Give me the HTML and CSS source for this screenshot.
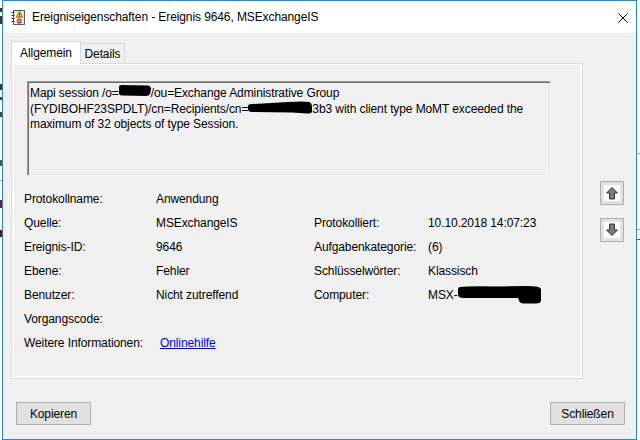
FILE: index.html
```html
<!DOCTYPE html>
<html lang="de">
<head>
<meta charset="utf-8">
<title>Ereigniseigenschaften</title>
<link rel="stylesheet" href="styles.css">
</head>
<body>
<div class="edge edge-left"></div>
<div class="window">
  <div class="titlebar">
    <svg class="app-icon" width="14" height="15" viewBox="0 0 14 15">
      <rect x="2.5" y="0.5" width="11" height="14" fill="#d3dded" stroke="#4d5f7a"/>
      <rect x="3.5" y="1.5" width="9" height="12" fill="#eef3fa"/>
      <g fill="#3a3a3a">
        <rect x="0.5" y="2" width="3" height="1"/>
        <rect x="0.5" y="5" width="3" height="1"/>
        <rect x="0.5" y="8" width="3" height="1"/>
        <rect x="0.5" y="11" width="3" height="1"/>
      </g>
      <path d="M8.5 1.2 L12 7.2 H5 Z" fill="#f2c200" stroke="#8a6a00" stroke-width="0.8" stroke-linejoin="round"/>
      <rect x="8" y="3.3" width="1" height="2" fill="#000"/>
      <rect x="8" y="6" width="1" height="0.8" fill="#000"/>
      <circle cx="8.3" cy="11" r="2.6" fill="#d5262f"/>
      <rect x="6.8" y="10.5" width="3" height="1" fill="#fff"/>
    </svg>
    <span class="title">Ereigniseigenschaften - Ereignis 9646, MSExchangeIS</span>
    <svg class="close" width="10" height="10" viewBox="0 0 10 10">
      <path d="M0.5 0.5 L9.5 9.5 M9.5 0.5 L0.5 9.5" stroke="#000" stroke-width="1" fill="none"/>
    </svg>
  </div>
  <div class="client">
    <div class="main">
      <div class="tabctl">
        <div class="tabs">
          <div class="tab active">Allgemein</div>
          <div class="tab details">Details</div>
        </div>
        <div class="panel">
          <div class="page">
            <div class="msg">Mapi session /o=<svg class="blob" width="32" height="11" viewBox="0 0 32 11"><path d="M0 2 Q0 0 3 0 L29 0.5 Q32 1 32 4 L31 9 Q30 11 27 11 L3 10.5 Q0 10 0 8 Z" fill="#000"/></svg>/ou=Exchange Administrative Group<br>(FYDIBOHF23SPDLT)/cn=Recipients/cn=<svg class="blob blob2" width="64" height="13" viewBox="0 0 64 13"><path d="M0 5 Q0 3 4 3 L40 1 Q56 0 61 1 Q64 2 64 6 L64 11 Q63 13 59 12.5 L44 11.5 L4 11 Q0 11 0 8 Z" fill="#000"/></svg>3b3 with client type MoMT exceeded the<br>maximum of 32 objects of type Session.</div>
            <div class="grid">
              <span>Protokollname:</span><span>Anwendung</span><span></span><span></span>
              <span>Quelle:</span><span>MSExchangeIS</span><span>Protokolliert:</span><span>10.10.2018 14:07:23</span>
              <span>Ereignis-ID:</span><span>9646</span><span>Aufgabenkategorie:</span><span>(6)</span>
              <span>Ebene:</span><span>Fehler</span><span>Schlüsselwörter:</span><span>Klassisch</span>
              <span>Benutzer:</span><span>Nicht zutreffend</span><span>Computer:</span><span>MSX-<svg class="blob blob3" width="84" height="18" viewBox="0 0 84 18"><path d="M2 1 Q10 0 40 0.5 L70 0 Q82 0 83 3 L83 15 Q82 17.5 78 17.5 L65 17.5 Q61 17 61 14 L60 12 L5 12 Q0 12 0 8 L0 4 Q0 1 2 1 Z" fill="#000"/></svg></span>
              <span>Vorgangscode:</span><span></span><span></span><span></span>
              <span>Weitere Informationen:</span><span class="linkcell"><a class="link" href="#">Onlinehilfe</a></span><span></span><span></span>
            </div>
          </div>
        </div>
      </div>
      <div class="nav">
        <button class="navbtn" type="button" aria-label="Vorheriges Ereignis">
          <svg width="16" height="16" viewBox="0 0 16 16"><rect width="16" height="16" fill="#fff"/><path d="M8 2.5 L13.5 8 H10.5 V14 H5.5 V8 H2.5 Z" fill="#7a7a7a" stroke="#333" stroke-width="1" stroke-linejoin="miter"/></svg>
        </button>
        <button class="navbtn" type="button" aria-label="Nächstes Ereignis">
          <svg width="16" height="16" viewBox="0 0 16 16"><rect width="16" height="16" fill="#fff"/><path d="M8 13.5 L13.5 8 H10.5 V2 H5.5 V8 H2.5 Z" fill="#7a7a7a" stroke="#333" stroke-width="1" stroke-linejoin="miter"/></svg>
        </button>
      </div>
    </div>
    <div class="footer">
      <button class="btn" type="button">Kopieren</button>
      <button class="btn" type="button">Schließen</button>
    </div>
  </div>
</div>
<div class="edge edge-right"></div>
</body>
</html>
```

FILE: styles.css
```css
* { box-sizing: border-box; }

html, body {
  margin: 0;
  padding: 0;
}

body {
  width: 640px;
  height: 440px;
  overflow: hidden;
  display: flex;
  background: #fff;
  font-family: "Liberation Sans", Arial, sans-serif;
  font-size: 12px;
  letter-spacing: -0.1px;
  color: #000;
}

.edge { height: 440px; flex: none; }

.edge-left {
  width: 2px;
  background: linear-gradient(#fff 0 8px, #5a2a1a 8px 12px, #fff 12px 16px, #5a2a1a 16px 24px,
    #fff 24px 84px, #333 84px 90px, #fff 90px 97px, #444 97px 100px, #fff 100px 112px,
    #444 112px 117px, #fff 117px 160px, #555 160px 166px, #fff 166px 180px, #999 180px 181px,
    #fff 181px 200px, #6a1a4a 200px 208px, #fff 208px 230px, #5a1020 230px 237px, #fff 237px);
}

.edge-right {
  width: 3px;
  background: linear-gradient(#fff 0 153px, #a0a0a0 153px 154px, #fff 154px 229px,
    #a0a0a0 229px 230px, #fff 230px 239px, #555 239px 240px, #fff 240px);
}

.window {
  width: 635px;
  height: 440px;
  flex: none;
  border: 1px solid #2a86d4;
  display: flex;
  flex-direction: column;
}

.titlebar {
  height: 32px;
  flex: none;
  background: #fff;
  display: flex;
  align-items: center;
  padding-left: 8px;
}

.app-icon { flex: none; margin-top: 1px; }

.title {
  margin-left: 7px;
  white-space: nowrap;
}

.close {
  margin-left: auto;
  margin-right: 8px;
  margin-top: 2px;
  flex: none;
}

.client {
  flex: 1;
  background: #f0f0f0;
  padding-top: 8px;
  display: flex;
  flex-direction: column;
}

.main {
  display: flex;
  padding-left: 8px;
}

.tabctl {
  width: 572px;
  flex: none;
  display: flex;
  flex-direction: column;
}

.tabs {
  height: 22px;
  display: flex;
  align-items: flex-end;
}

.tab {
  height: 20px;
  border: 1px solid #d9d9d9;
  border-bottom: none;
  background: #f0f0f0;
  display: flex;
  align-items: center;
  justify-content: center;
  white-space: nowrap;
}

.tab.active {
  width: 70px;
  height: 23px;
  margin-bottom: -1px;
  background: #fff;
  position: relative;
  z-index: 1;
}

.tab.details {
  width: 44px;
  border-left: none;
  padding-top: 1px;
}

.panel {
  height: 316px;
  border: 1px solid #d9d9d9;
  background: #fff;
  padding: 1px 2px 2px 2px;
}

.page {
  height: 100%;
  background: #f0f0f0;
  padding-top: 16px;
}

.msg {
  width: 524px;
  height: 95px;
  margin-left: 13px;
  border: 1px solid;
  border-color: #a0a0a0 #fff #fff #a0a0a0;
  box-shadow: inset 1px 1px 0 #696969, inset -1px -1px 0 #e3e3e3;
  padding: 3px 2px;
  line-height: 15px;
  white-space: nowrap;
}

.blob { vertical-align: 1px; }
.blob2 { vertical-align: -1.5px; }
.blob3 { vertical-align: -5px; }

.grid {
  margin: 11px 0 0 10px;
  display: grid;
  grid-template-columns: 132px 158px 114px 1fr;
  line-height: 24px;
  white-space: nowrap;
}

.linkcell { padding-left: 4px; }

.link {
  color: #0000ff;
  text-decoration: underline;
}

.nav {
  margin-left: 17px;
  margin-top: 140px;
  display: flex;
  flex-direction: column;
  gap: 13px;
}

.navbtn {
  width: 24px;
  height: 24px;
  padding: 0;
  border: 1px solid #adadad;
  background: #e1e1e1;
  display: flex;
  align-items: center;
  justify-content: center;
}

.navbtn svg { display: block; }

.footer {
  margin-top: 23px;
  display: flex;
  justify-content: space-between;
  padding: 0 11px 0 13px;
}

.btn {
  width: 75px;
  height: 23px;
  padding: 0;
  border: 1px solid #adadad;
  background: #e1e1e1;
  font-family: inherit;
  font-size: 12px;
  letter-spacing: -0.1px;
  color: #000;
}
```
